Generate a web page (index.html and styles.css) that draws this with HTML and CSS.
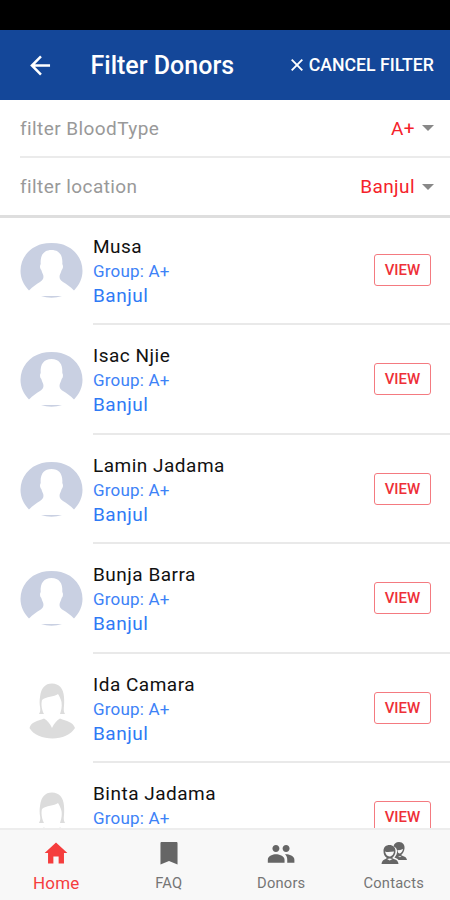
FILE: index.html
```html
<!DOCTYPE html>
<html lang="en">
<head>
<meta charset="UTF-8">
<title>Filter Donors</title>
<link rel="stylesheet" href="styles.css">
</head>
<body>

<svg class="defs">
  <symbol id="man" viewBox="0 0 63 58">
    <path fill="#c9d0e2" d="M22 2Q26 1 31.500 1T41 2C54 5.500 62.500 16 62.500 29c0 7-3 14-8.500 19.500-4-4-7-6-11-8.500-3.500-2-4-5-3-7.500.7-1.500 1.200-3 1.700-4.500 1.600-1.500 1.600-4.500.6-6C43 13 39 8 31.500 8S20 13 20.700 22c-1 1.500-1 4.500.6 6 .5 1.500 1 3 1.700 4.500 1 2.500.5 5.500-3 7.500-4 2.500-7 4.500-11 8.500C3.500 43 .5 36 .5 29 .5 16 9 5.500 22 2zM21 54h21q-5 1.700-10.500 1.700T21 54z"/>
  </symbol>
  <symbol id="woman" viewBox="0 0 63 58">
    <path fill="#dcdcdc" d="M19 32c1-2 1.500-3 1.200-6-.7-4-.8-7-.2-11C21 6 25 1.500 32 1.500c7 0 11.500 5 12 13.500.3 4 .2 8-.2 11-.2 3 .2 4 1.200 6h-5c1-3 2.300-7 1.500-12-.8-3.500-2-5.500-3.500-8-4 3-12 2.500-16 6-1.300 5 .2 11 2 14zM9.500 46c1.500-6 8-7 14.500-9.500 3 1.500 6 5 8 9.500 2-4.500 5-8 8-9.500 6.500 2.500 13 3.500 15 9.500-4 6.500-13 10.500-22.500 10.500S13 52.500 9.500 46z"/>
  </symbol>
</svg>

<div class="status-bar"></div>
<header class="toolbar">
  <svg class="back" viewBox="0 0 22 22"><path d="M21 11H2M11.500 1.500L2 11l9.500 9.500"/></svg>
  <h1>Filter Donors</h1>
  <button class="cancel">
    <svg viewBox="0 0 12 12"><path d="M.7.700l10.600 10.600M11.300.700L.7 11.300"/></svg>
    <span>CANCEL FILTER</span>
  </button>
</header>

<div class="filters">
  <div class="filter">
    <span>filter BloodType</span>
    <span class="value">A+</span>
    <i class="caret"></i>
  </div>
  <div class="filter">
    <span>filter location</span>
    <span class="value">Banjul</span>
    <i class="caret"></i>
  </div>
</div>

<main class="donors">
  <div class="donor">
    <svg class="avatar"><use href="#man"/></svg>
    <div class="info">
      <div class="text"><h2>Musa</h2><h3>Group: A+</h3><p>Banjul</p></div>
      <button class="view">VIEW</button>
    </div>
  </div>
  <div class="donor">
    <svg class="avatar"><use href="#man"/></svg>
    <div class="info">
      <div class="text"><h2>Isac Njie</h2><h3>Group: A+</h3><p>Banjul</p></div>
      <button class="view">VIEW</button>
    </div>
  </div>
  <div class="donor">
    <svg class="avatar"><use href="#man"/></svg>
    <div class="info">
      <div class="text"><h2>Lamin Jadama</h2><h3>Group: A+</h3><p>Banjul</p></div>
      <button class="view">VIEW</button>
    </div>
  </div>
  <div class="donor">
    <svg class="avatar"><use href="#man"/></svg>
    <div class="info">
      <div class="text"><h2>Bunja Barra</h2><h3>Group: A+</h3><p>Banjul</p></div>
      <button class="view">VIEW</button>
    </div>
  </div>
  <div class="donor">
    <svg class="avatar female"><use href="#woman"/></svg>
    <div class="info">
      <div class="text"><h2>Ida Camara</h2><h3>Group: A+</h3><p>Banjul</p></div>
      <button class="view">VIEW</button>
    </div>
  </div>
  <div class="donor">
    <svg class="avatar female"><use href="#woman"/></svg>
    <div class="info">
      <div class="text"><h2>Binta Jadama</h2><h3>Group: A+</h3></div>
      <button class="view">VIEW</button>
    </div>
  </div>
</main>

<nav class="tabs">
  <a class="tab active">
    <svg viewBox="0 0 512 512"><path d="M208 448V320h96v128h97.600V256H464L256 64 48 256h62.400v192z"/></svg>
    <span>Home</span>
  </a>
  <a class="tab">
    <svg viewBox="0 0 512 512"><path d="M390 56H122c-14 0-22 10-22 24v388l156-66 156 66V80c0-14-8-24-22-24z"/></svg>
    <span>FAQ</span>
  </a>
  <a class="tab">
    <svg viewBox="0 0 512 512"><path d="M349 238c36 0 64-29 64-64s-28-64-64-64-64 29-64 64 28 64 64 64zm-186 0c36 0 64-29 64-64s-28-64-64-64-64 29-64 64 28 64 64 64zm0 42c-51 0-148 26-148 100v54h306v-54c0-74-107-100-158-100zm186 0c-6 0-13 0-21 1 26 19 42 53 42 99v54h131v-54c0-74-101-100-152-100z"/></svg>
    <span>Donors</span>
  </a>
  <a class="tab">
    <svg viewBox="0 0 28 28">
      <path d="M13.500 7.500C14 4.500 16 3 19 3c4 0 6 3 5.500 6.500-.2 2.500-1.500 5-3 6v1c2 .8 5 1.200 5.500 4.500h-8.500c-1-1.500-2.500-2-4-2.500 1.500-2 3-4 2.500-7-.3-2-1.500-3.500-3.500-4z"/>
      <path class="gap" d="M17.500 11c2.500.5 4-.5 5.500-1-.3 2-1.500 4-3 4.500-1.500 0-2.500-1-2.500-3.500zM18 17.500l2 .8 1.500-1.300"/>
      <path d="M3.500 12c0-4 2.500-6 6-6s6 2.500 6 6c0 3-1.500 5.500-3 6.500v1c2.500 1 5.500 1 6 5.500h-17c.5-4.500 3.500-4.500 5-5.500v-1c-2-1-3-3.500-3-6.500z"/>
      <path class="gap" d="M5 12.500c3 1.200 6 0 9 0-.3 2.500-2 5-4.500 5S5.500 15 5 12.500zM7 20l2.700 1.500L12.500 20l-2.800-.5z"/>
    </svg>
    <span>Contacts</span>
  </a>
</nav>

</body>
</html>
```
FILE: styles.css
```css
* { box-sizing: border-box; }
body {
  display: flex;
  flex-direction: column;
  height: 900px;
  margin: 0;
  overflow: hidden;
  background: #fff;
  font-family: Roboto, sans-serif;
}
h1, h2, h3, p { margin: 0; font-weight: 400; }
button { font-family: inherit; background: none; }
.defs { display: none; }
.status-bar { flex: none; height: 30px; background: #000; }

.toolbar {
  flex: none;
  display: flex;
  align-items: center;
  height: 70px;
  padding: 0 16px 0 30px;
  background: #144799;
  color: #fff;
}
.toolbar svg { fill: none; stroke: #fff; }
.back { width: 21px; height: 21px; stroke-width: 2.6; }
.toolbar h1 {
  margin-left: 39.5px;
  font-size: 25px;
  font-weight: 500;
}
.cancel {
  display: flex;
  align-items: center;
  gap: 6px;
  margin-left: auto;
  padding: 0;
  border: 0;
  color: #fff;
  font-size: 17.7px;
  font-weight: 500;
  white-space: nowrap;
}
.cancel svg { width: 12px; height: 12px; stroke-width: 1.9; }

.filters {
  flex: none;
  height: 118px;
  padding-left: 20px;
  border-bottom: 3px solid #dedede;
}
.filter {
  display: flex;
  align-items: center;
  height: 58px;
  padding-right: 16px;
  border-bottom: 2px solid #ebebeb;
  color: #999;
  font-size: 19px;
  letter-spacing: .42px;
}
.filter:last-child { height: 57px; border-bottom: 0; }
.value { margin-left: auto; color: #f5222b; }
.caret {
  margin-left: 7px;
  border: 6px solid transparent;
  border-top-color: #888;
  border-bottom: 0;
}

.donors { flex: 1; min-height: 0; overflow: hidden; }
.donor {
  display: flex;
  height: 109.4px;
  padding-left: 20px;
}
.avatar { flex: none; width: 63px; height: 58px; margin: 24px 10px 0 0; }
.female { margin-top: 26px; }
.info {
  flex: 1;
  display: flex;
  justify-content: space-between;
  height: 107.4px;
  padding: 16px 19px 0 0;
  border-bottom: 2px solid #e9e9e9;
}
.text h2 { color: #111; font-size: 19px; line-height: 25px; letter-spacing: .5px; }
.text h3 { color: #3d82f7; font-size: 17px; line-height: 24px; letter-spacing: .2px; }
.text p { color: #2f7af5; font-size: 19px; line-height: 26px; letter-spacing: .5px; }
.view {
  width: 57px;
  height: 32px;
  margin-top: 20px;
  padding: 0;
  border: 1.500px solid #f47a80;
  border-radius: 3px;
  color: #ee3038;
  font-size: 15px;
  font-weight: 500;
}

.tabs {
  flex: none;
  display: grid;
  grid-template-columns: repeat(4, 1fr);
  height: 72px;
  border-top: 2px solid #ededed;
  background: #f8f8f8;
}
.tab {
  display: flex;
  flex-direction: column;
  align-items: center;
  padding-top: 9px;
  color: #757575;
  font-size: 14.7px;
  letter-spacing: .2px;
}
.tab svg { width: 28px; height: 28px; fill: #666; }
.tab span { margin-top: 7px; line-height: 18px; }
.tab .gap { fill: #f8f8f8; }
.active { color: #f53d3d; font-size: 17px; }
.active svg { fill: #f53d3d; }
```
